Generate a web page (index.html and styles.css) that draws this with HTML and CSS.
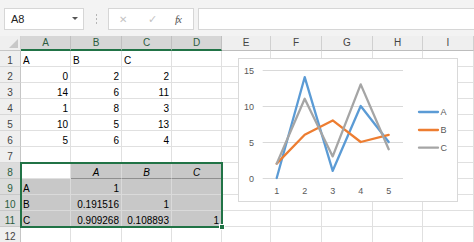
FILE: index.html
```html
<!DOCTYPE html>
<html>
<head>
<meta charset="utf-8">
<link rel="stylesheet" href="styles.css">
</head>
<body>
<div class="app">
  <div class="toolbar">
    <div class="namebox"><span>A8</span><span class="dd"></span></div>
    <div class="grip"><i></i><i></i><i></i></div>
    <div class="fbtns">
      <span class="fb x">✕</span>
      <span class="fb ok">✓</span>
      <span class="fb fx">fx</span>
    </div>
    <div class="finput"></div>
  </div>
  <div class="sheet">
    <div class="grid">
      <div class="corner"><span class="tri"></span></div>
      <div class="ch hs">A</div><div class="ch hs">B</div><div class="ch hs">C</div><div class="ch hs">D</div>
      <div class="ch">E</div><div class="ch">F</div><div class="ch">G</div><div class="ch">H</div><div class="ch">I</div>

      <div class="rh">1</div><div class="c">A</div><div class="c">B</div><div class="c">C</div><div class="c"></div><div class="c"></div><div class="c"></div><div class="c"></div><div class="c"></div><div class="c"></div>
      <div class="rh">2</div><div class="c r">0</div><div class="c r">2</div><div class="c r">2</div><div class="c"></div><div class="c"></div><div class="c"></div><div class="c"></div><div class="c"></div><div class="c"></div>
      <div class="rh">3</div><div class="c r">14</div><div class="c r">6</div><div class="c r">11</div><div class="c"></div><div class="c"></div><div class="c"></div><div class="c"></div><div class="c"></div><div class="c"></div>
      <div class="rh">4</div><div class="c r">1</div><div class="c r">8</div><div class="c r">3</div><div class="c"></div><div class="c"></div><div class="c"></div><div class="c"></div><div class="c"></div><div class="c"></div>
      <div class="rh">5</div><div class="c r">10</div><div class="c r">5</div><div class="c r">13</div><div class="c"></div><div class="c"></div><div class="c"></div><div class="c"></div><div class="c"></div><div class="c"></div>
      <div class="rh">6</div><div class="c r">5</div><div class="c r">6</div><div class="c r">4</div><div class="c"></div><div class="c"></div><div class="c"></div><div class="c"></div><div class="c"></div><div class="c"></div>
      <div class="rh">7</div><div class="c"></div><div class="c"></div><div class="c"></div><div class="c"></div><div class="c"></div><div class="c"></div><div class="c"></div><div class="c"></div><div class="c"></div>
      <div class="rh rs">8</div><div class="c act"></div><div class="c sel it bb">A</div><div class="c sel it bb">B</div><div class="c sel it bb">C</div><div class="c"></div><div class="c"></div><div class="c"></div><div class="c"></div><div class="c"></div>
      <div class="rh rs">9</div><div class="c sel">A</div><div class="c sel r">1</div><div class="c sel"></div><div class="c sel"></div><div class="c"></div><div class="c"></div><div class="c"></div><div class="c"></div><div class="c"></div>
      <div class="rh rs">10</div><div class="c sel">B</div><div class="c sel r">0.191516</div><div class="c sel r">1</div><div class="c sel"></div><div class="c"></div><div class="c"></div><div class="c"></div><div class="c"></div><div class="c"></div>
      <div class="rh rs">11</div><div class="c sel">C</div><div class="c sel r">0.909268</div><div class="c sel r">0.108893</div><div class="c sel r">1</div><div class="c"></div><div class="c"></div><div class="c"></div><div class="c"></div><div class="c"></div>
      <div class="rh">12</div><div class="c"></div><div class="c"></div><div class="c"></div><div class="c"></div><div class="c"></div><div class="c"></div><div class="c"></div><div class="c"></div><div class="c"></div>
    </div>

    <div class="selection"><span class="handle"></span></div>

    <div class="chart">
      <svg width="220" height="144" viewBox="0 0 220 144">
        <g stroke="#d9d9d9" stroke-width="1">
          <line x1="24.7" y1="12.5" x2="165" y2="12.5"/>
          <line x1="24.7" y1="48.5" x2="165" y2="48.5"/>
          <line x1="24.7" y1="84.5" x2="165" y2="84.5"/>
          <line x1="24.7" y1="120.5" x2="165" y2="120.5"/>
        </g>
        <g class="lbl" text-anchor="end">
          <text x="16" y="15.5">15</text>
          <text x="16" y="51.5">10</text>
          <text x="16" y="87.5">5</text>
          <text x="16" y="123.5">0</text>
        </g>
        <g class="lbl" text-anchor="middle">
          <text x="38.7" y="135.5">1</text>
          <text x="66.7" y="135.5">2</text>
          <text x="94.7" y="135.5">3</text>
          <text x="122.7" y="135.5">4</text>
          <text x="150.7" y="135.5">5</text>
        </g>
        <g fill="none" stroke-width="2.3" stroke-linejoin="round" stroke-linecap="round">
          <polyline stroke="#5b9bd5" points="38.7,120 66.7,19.2 94.7,112.8 122.7,48 150.7,84"/>
          <polyline stroke="#ed7d31" points="38.7,105.6 66.7,76.8 94.7,62.4 122.7,84 150.7,76.8"/>
          <polyline stroke="#a5a5a5" points="38.7,105.6 66.7,40.8 94.7,98.4 122.7,26.4 150.7,91.2"/>
          <line stroke="#5b9bd5" x1="181" y1="54" x2="200" y2="54"/>
          <line stroke="#ed7d31" x1="181" y1="72" x2="200" y2="72"/>
          <line stroke="#a5a5a5" x1="181" y1="89.7" x2="200" y2="89.7"/>
        </g>
        <g class="lbl">
          <text x="202.5" y="57">A</text>
          <text x="202.5" y="75">B</text>
          <text x="202.5" y="92.7">C</text>
        </g>
      </svg>
    </div>
  </div>
</div>
</body>
</html>
```

FILE: styles.css
```css
* { box-sizing: border-box; }
html, body { margin: 0; padding: 0; }
body {
  width: 474px;
  height: 242px;
  overflow: hidden;
  background: #ffffff;
  font-family: "Liberation Sans", Arial, sans-serif;
  font-size: 10px;
  color: #000;
}
.app { width: 474px; height: 242px; overflow: hidden; }

.toolbar {
  height: 36px;
  background: #f3f3f3;
  display: flex;
  align-items: flex-start;
  padding-top: 8px;
  padding-left: 4px;
}
.namebox {
  width: 80px;
  height: 22px;
  background: #fff;
  border: 1px solid #d6d6d6;
  display: flex;
  align-items: center;
  justify-content: space-between;
  padding: 0 5px 0 6px;
  font-size: 11px;
  color: #222;
}
.dd {
  width: 0; height: 0;
  border-left: 3px solid transparent;
  border-right: 3px solid transparent;
  border-top: 3px solid #555;
  margin-top: -2px;
}
.grip {
  width: 24px;
  height: 22px;
  display: flex;
  flex-direction: column;
  align-items: center;
  justify-content: center;
  gap: 2px;
}
.grip i { width: 1px; height: 2px; background: #b5b5b5; display: block; }
.fbtns {
  width: 86px;
  height: 22px;
  background: #fff;
  border: 1px solid #d6d6d6;
  display: flex;
  align-items: center;
  padding-left: 9px;
}
.fb { display: block; text-align: center; }
.fb.x { width: 10px; color: #c4c4c4; font-size: 10px; }
.fb.ok { width: 10px; margin-left: 19px; color: #c4c4c4; font-size: 11px; }
.fb.fx { margin-left: 18px; font-family: "Liberation Serif", serif; font-style: italic; color: #555; font-size: 11px; letter-spacing: -1px; }
.finput {
  flex: 1;
  height: 22px;
  margin-left: 4px;
  background: #fff;
  border: 1px solid #d6d6d6;
  border-right: none;
}

.sheet { position: relative; }
.grid {
  display: grid;
  grid-template-columns: 21px 50px 51px 50px 50px 49px 51px 51px 50px 51px;
  grid-template-rows: 15px repeat(12, 16px);
}
.corner {
  background: #efefef;
  border-right: 1px solid #d2d2d2;
  border-bottom: 1px solid #c6c6c6;
  position: relative;
}
.tri {
  position: absolute;
  right: 2px;
  bottom: 2px;
  width: 0; height: 0;
  border-left: 9px solid transparent;
  border-bottom: 9px solid #c8c8c8;
}
.ch {
  background: #efefef;
  border-right: 1px solid #d0d0d0;
  border-bottom: 1px solid #bdbdbd;
  text-align: center;
  line-height: 14px;
  color: #444;
}
.ch.hs {
  background: #d6d6d6;
  border-right: 1px solid #c0c0c0;
  border-bottom: 2px solid #217346;
  line-height: 14px;
  color: #2b5c40;
}
.rh {
  background: #efefef;
  border-right: 1px solid #c6c6c6;
  border-bottom: 1px solid #d8d8d8;
  text-align: center;
  padding-top: 5px;
  line-height: 10px;
  color: #444;
}
.rh.rs { background: #dcdcdc; color: #2b5c40; border-bottom-color: #c8c8c8; }
.c {
  border-right: 1px solid #e0e0e0;
  border-bottom: 1px solid #e0e0e0;
  padding: 5px 2px 0 2px;
  line-height: 10px;
  white-space: nowrap;
  overflow: visible;
}
.c.r { text-align: right; }
.c.sel { background: #c8c8c8; border-right-color: #dadada; border-bottom-color: #dadada; }
.c.it { font-style: italic; text-align: center; }
.c.bb { border-bottom-color: #8f8f8f; }

.selection {
  position: absolute;
  left: 20px;
  top: 126px;
  width: 203px;
  height: 66px;
  border: 2px solid #217346;
  pointer-events: none;
}
.handle {
  position: absolute;
  right: -4px;
  bottom: -4px;
  width: 6px;
  height: 6px;
  background: #217346;
  border: 1px solid #fff;
}

.chart {
  position: absolute;
  left: 238px;
  top: 22px;
  width: 220px;
  height: 144px;
  background: #fff;
  border: 1px solid #d9d9d9;
}
.chart svg { display: block; position: absolute; left: -1px; top: -1px; }
.lbl text {
  font-family: "Liberation Sans", Arial, sans-serif;
  font-size: 9px;
  fill: #595959;
}
```
